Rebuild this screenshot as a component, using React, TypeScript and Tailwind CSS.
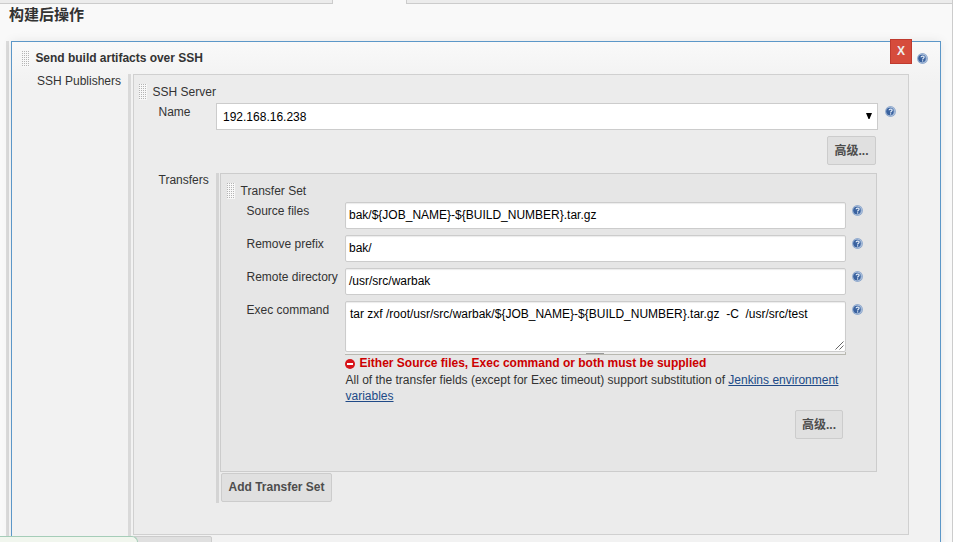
import React from "react";

const LATIN = "font-['Liberation_Sans','Noto_Sans_CJK_SC',sans-serif]";

function HelpIcon() {
  return (
    <svg className="block h-[11px] w-[11px] shrink-0" viewBox="0 0 11 11">
      <circle cx="5.5" cy="5.5" r="5.4" fill="#87a3ca" />
      <circle cx="5.5" cy="5.5" r="4.4" fill="none" stroke="#b9c9e0" strokeWidth="0.8" />
      <circle cx="4.9" cy="5.5" r="3.7" fill="#3a629f" />
      <path d="M4.1 4.2C4.1 2.7 7.1 2.6 7.1 4.2C7.1 5.3 5.7 5.3 5.6 6.5" fill="none" stroke="#e4edf8" strokeWidth="1.2" />
      <rect x="5" y="7.3" width="1.2" height="1.2" fill="#e4edf8" />
    </svg>
  );
}

function DragHandle() {
  return (
    <div className="h-4 w-2 shrink-0 bg-[#f8f8f8] bg-[radial-gradient(circle_at_0.5px_0.5px,#b4b4b4_0.6px,transparent_0.7px)] bg-[length:2px_2px]" />
  );
}

function Button({ children, className }: { children?: React.ReactNode; className: string }) {
  return (
    <button
      className={`box-border block h-[29px] shrink-0 rounded-[2px] border border-[#ccc] bg-[#e0e0e0] text-center text-[12px] font-bold whitespace-nowrap text-[#4d4d4d] ${className}`}
    >
      {children}
    </button>
  );
}

function Field({ label, value }: { label: string; value: string }) {
  return (
    <div className="flex h-[33px] items-start">
      <div className="w-[99px] pl-[0.5px] pt-px leading-4">{label}</div>
      <div className="h-[27px] w-[501px] rounded-[2px] border border-[#ccc] bg-white pl-[3px] leading-[24px] text-black shadow-[inset_0_1px_1px_rgba(0,0,0,0.08)]">
        {value}
      </div>
      <div className="ml-[6px] pt-[3px]">
        <HelpIcon />
      </div>
    </div>
  );
}

function TransferSet() {
  return (
    <div className="h-[299px] w-[657px] border border-[#ccc] bg-[#e6e6e6] pt-[9px]">
      <div className="flex pl-[6px]">
        <DragHandle />
        <span className="ml-[5.6px] leading-4">Transfer Set</span>
      </div>
      <div className="pl-[25px] pt-[3px]">
        <Field label="Source files" value="bak/${JOB_NAME}-${BUILD_NUMBER}.tar.gz" />
        <Field label="Remove prefix" value="bak/" />
        <Field label="Remote directory" value="/usr/src/warbak" />
        <div className="flex items-start">
          <div className="w-[99px] pl-[0.5px] pt-px leading-4">Exec command</div>
          <div className="w-[501px]">
            <div className="flex h-[51px] justify-between rounded-[2px] border border-[#ccc] bg-white pl-[4px] text-black shadow-[inset_0_1px_1px_rgba(0,0,0,0.08)]">
              <span className="whitespace-pre leading-[24px]">
                {"tar zxf /root/usr/src/warbak/${JOB_NAME}-${BUILD_NUMBER}.tar.gz  -C  /usr/src/test"}
              </span>
              <svg className="mb-px mr-px h-[9px] w-[9px] self-end" viewBox="0 0 9 9" stroke="#555" strokeWidth="0.9">
                <path d="M0.5 8.5L8.5 0.5M4.5 8.5L8.5 4.5" />
              </svg>
            </div>
            <div className="flex h-[3px] justify-center border-b border-r border-[#b8b8b0] bg-[#eee]">
              <div className="mt-px h-px w-[18px] bg-[#999]" />
            </div>
            <div className="flex h-4 items-center font-bold text-[#c00]">
              <svg className="mr-[4.5px] mt-[2px] h-[10px] w-[10px]" viewBox="0 0 10 10">
                <circle cx="5" cy="5" r="5" fill="#d7141a" />
                <rect x="2" y="4" width="6" height="2" fill="#fff" />
              </svg>
              Either Source files, Exec command or both must be supplied
            </div>
            <div className="mt-px pl-[0.5px] leading-4">
              <div className="flex whitespace-pre">
                <span>{"All of the transfer fields (except for Exec timeout) support substitution of "}</span>
                <a className="text-[#204a87] underline">Jenkins environment</a>
              </div>
              <a className="block text-[#204a87] underline">variables</a>
            </div>
          </div>
          <div className="ml-[6px] pt-[3px]">
            <HelpIcon />
          </div>
        </div>
        <Button className="ml-[549px] mt-[6px] w-12 pt-[2px] leading-[25px]">高级...</Button>
      </div>
    </div>
  );
}

function SshServer() {
  return (
    <div className="h-[461px] w-[776px] border border-[#d0d0d0] bg-[#ececec] pt-[9px]">
      <div className="flex pl-[5px]">
        <DragHandle />
        <span className="ml-[5.6px] leading-4">SSH Server</span>
      </div>
      <div className="mt-[3px] flex h-[33px] items-start pl-[24px]">
        <div className="w-[58px] pl-[0.5px] pt-px leading-4">Name</div>
        <div className="flex h-[27px] w-[662px] items-center justify-between border border-[#ccc] bg-white pl-[6px] pr-[5px] text-black">
          <span>192.168.16.238</span>
          <svg className="mb-px h-[6px] w-[6px]" viewBox="0 0 6 6">
            <path d="M0 0H6L3.5 6H2.5Z" />
          </svg>
        </div>
        <div className="ml-[6.5px] pt-[3px]">
          <HelpIcon />
        </div>
      </div>
      <Button className="ml-[693px] w-[49px] pt-[2px] leading-[25px]">高级...</Button>
      <div className="mt-[8px] flex pl-[24px]">
        <div className="w-[58px] pl-[0.5px] leading-[14px]">Transfers</div>
        <div className="h-[330px] w-[3px] bg-[#d4d4d4]" />
        <div className="ml-px">
          <TransferSet />
          <Button className="ml-px mt-px w-[111px] leading-[27px]">Add Transfer Set</Button>
        </div>
      </div>
    </div>
  );
}

export default function App() {
  return (
    <div className={`relative flex h-[542px] w-[954px] overflow-hidden bg-white text-[12px] text-[#333] ${LATIN}`}>
      <div className="h-full w-[953px] border-r border-[#ccc] bg-[#f9f9f9]">
        <div className="flex h-1 justify-between">
          <div className="w-[333px] border-b border-r border-[#ccc] bg-[#ececec]" />
          <div className="w-[546px] border-b border-l border-[#ccc] bg-[#ececec]" />
        </div>
        <h1 className="h-[37px] pl-[9px] text-[15px] font-bold leading-[22px]">构建后操作</h1>
        <div className="flex pl-[6px]">
          <div className="h-[501px] w-[3px] bg-[#dcdcdc]" />
          <div className="ml-[2px] h-[520px] w-[930px] border border-[#5c97c8] bg-[#f2f2f2] bg-[linear-gradient(#f9f9f9,#f2f2f2_40px)] shadow-[0_0_10px_rgba(0,0,0,0.08)]">
            <div className="flex h-8 items-start">
              <div className="ml-[10px] mt-[9px]">
                <DragHandle />
              </div>
              <div className="ml-[5.4px] mt-[8px] grow font-bold leading-4 tracking-[-0.02px]">Send build artifacts over SSH</div>
              <button className="-mt-[3px] h-[25px] w-[22px] border border-[#bf3a2e] bg-[#d64c3c] text-[12px] font-bold leading-[21px] text-[#eee]">
                X
              </button>
              <div className="ml-[5px] mr-[12px] mt-[11px]">
                <HelpIcon />
              </div>
            </div>
            <div className="flex">
              <div className="w-[116px] pl-[25px] leading-[14px]">SSH Publishers</div>
              <div className="h-[480px] w-[3px] bg-[#d9d9d9]" />
              <div className="ml-[2px]">
                <SshServer />
                <Button className="mt-px w-[79px]" />
              </div>
            </div>
          </div>
        </div>
      </div>
      <div className="absolute bottom-[-1px] left-0 h-[7px] w-[138px] rounded-tr-[6px] border-r border-t border-[#a5cdb8] bg-[#f1f6ee]" />
    </div>
  );
}
